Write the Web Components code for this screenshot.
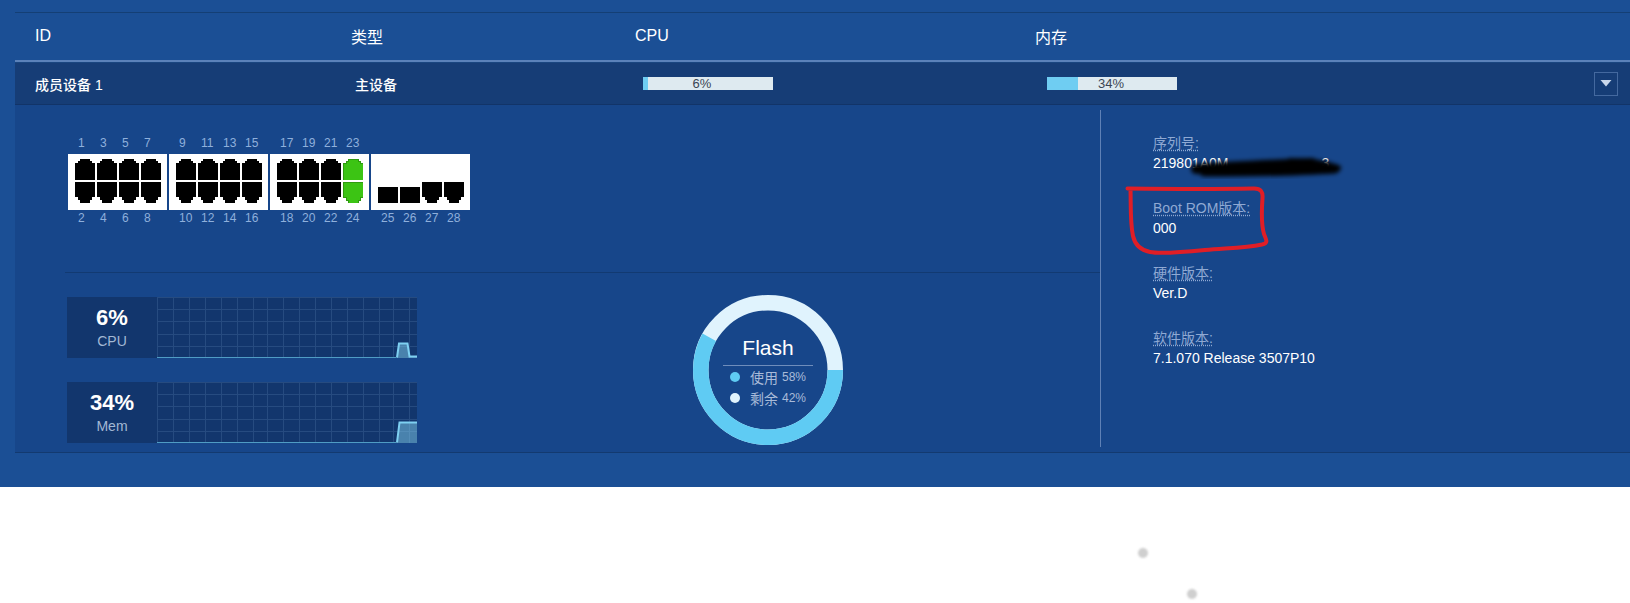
<!DOCTYPE html>
<html lang="zh">
<head>
<meta charset="utf-8">
<title>成员设备</title>
<style>
html,body{margin:0;padding:0;background:#fff}
body{font-family:"Liberation Sans","Noto Sans CJK SC",sans-serif;font-size:14px;color:#fff}
</style>
</head>
<body>
<device-page>
  <table-head></table-head>
  <member-row name="成员设备 1" role="主设备">
    <usage-bar slot="cpu" value="6" fill="5" shift="12"></usage-bar>
    <usage-bar slot="mem" value="34" fill="31" shift="2"></usage-bar>
  </member-row>
  <detail-panel>
    <switch-panel slot="switch"></switch-panel>
    <stat-chart slot="stats" value="6%" label="CPU" line="M0 60.5H240L242 46.5H250.5L252.5 59.5H260"></stat-chart>
    <stat-chart slot="stats" value="34%" label="Mem" line="M0 60.5H240L242.5 40.5H260"></stat-chart>
    <flash-donut slot="flash"></flash-donut>
    <info-item slot="info"><span slot="label">序列号:</span><span>219801A0M<span style="display:inline-block;width:93px"></span>3</span></info-item>
    <info-item slot="info"><span slot="label">Boot ROM版本:</span>000</info-item>
    <info-item slot="info"><span slot="label">硬件版本:</span>Ver.D</info-item>
    <info-item slot="info"><span slot="label">软件版本:</span>7.1.070 Release 3507P10</info-item>
  </detail-panel>
  <ink-overlay></ink-overlay>
</device-page>
<script>
function shadow(el, html){ el.attachShadow({mode:'open'}).innerHTML = html; return el.shadowRoot; }

customElements.define('device-page', class extends HTMLElement{
  constructor(){ super(); shadow(this, `<style>
    :host{display:block;position:relative;width:1630px;height:603px;background:#fff;overflow:hidden}
    .frame{height:475px;padding:12px 0 0 15px;background:#1b4f95}
    .table{border-top:1px solid #143f75}
  </style><div class="frame"><div class="table"><slot></slot></div></div><slot name="overlay"></slot>`); }
});

customElements.define('table-head', class extends HTMLElement{
  constructor(){ super(); shadow(this, `<style>
    :host{display:grid;grid-template-columns:316px 284px 400px 1fr;height:47px;padding-left:20px;align-items:center;font-size:16px;border-bottom:2px solid #5b82ba;box-sizing:content-box}
    span{padding-bottom:1px}
  </style><span>ID</span><span>类型</span><span>CPU</span><span>内存</span>`); }
});

customElements.define('member-row', class extends HTMLElement{
  constructor(){ super();
    shadow(this, `<style>
    :host{display:grid;grid-template-columns:316px 284px 400px 1fr auto;height:41px;padding:0 12px 0 20px;align-items:center;font-size:14px;font-weight:500;background:#163d76;border-top:1px solid #1a4680;border-bottom:1px solid #123468}
    .role{padding-left:4px}
    .cpu{padding-left:8px}
    .mem{padding-left:12px}
    button{all:unset;display:flex;align-items:center;justify-content:center;box-sizing:border-box;width:24px;height:24px;border:1px solid #44699f}
    button svg{display:block}
    </style><span class="name"></span><span class="role"></span><div class="cpu"><slot name="cpu"></slot></div><div class="mem"><slot name="mem"></slot></div><span></span>
    <button aria-label="展开"><svg width="12" height="7" viewBox="0 0 12 7"><path d="M.5 0H11.5L6 6.5Z" fill="#c9d8ec"/></svg></button>`);
    this.shadowRoot.querySelector('.name').textContent=this.getAttribute('name');
    this.shadowRoot.querySelector('.role').textContent=this.getAttribute('role');
    const g=this.shadowRoot.querySelectorAll('span')[2]; g.remove();
    this.shadowRoot.host.style.gridTemplateColumns='316px 284px 400px 1fr auto';
  }
});

customElements.define('usage-bar', class extends HTMLElement{
  constructor(){ super();
    const v=this.getAttribute('value'),f=this.getAttribute('fill'),s=this.getAttribute('shift');
    shadow(this, `<style>
    :host{display:block;width:130px;height:13px;background:#deeaf0;position:relative;font-size:13px;font-weight:400;line-height:14px;color:#3a4654}
    .fill{position:absolute;left:0;top:0;bottom:0;width:${f}px;background:#6fcdf2}
    .t{position:relative;display:block;text-align:center;padding-right:${s}px}
    </style><div class="fill"></div><span class="t">${v}%</span>`); }
});

customElements.define('detail-panel', class extends HTMLElement{
  constructor(){ super(); shadow(this, `<style>
    :host{display:flex;height:337px;padding:5px 0;background:#17468a;border-bottom:1px solid #133a70}
    .left{width:1035px;padding-left:50px;display:flex;flex-direction:column}
    .sw{height:136px;padding:26px 0 0 3px;border-bottom:1px solid #123a72}
    .low{display:flex;padding:24px 0 0 2px;gap:276px}
    .stats{display:flex;flex-direction:column;gap:24px}
    .flash{margin-top:-2px}
    .right{border-left:1px solid #5f81b6;padding:23px 0 0 52px;display:flex;flex-direction:column;gap:25px}
    </style>
    <div class="left">
      <div class="sw"><slot name="switch"></slot></div>
      <div class="low"><div class="stats"><slot name="stats"></slot></div><div class="flash"><slot name="flash"></slot></div></div>
    </div>
    <div class="right"><slot name="info"></slot></div>`); }
});

customElements.define('port-group', class extends HTMLElement{
  constructor(){ super();
    const top=this.getAttribute('top').split(','),bot=this.getAttribute('bottom').split(',');
    const kinds=(this.getAttribute('kinds')||'').split(',');
    const P={up:'M5 0H15V2H17V4H20V21H0V4H3V2H5Z',down:'M0 0H20V15H17V18H15V21H5V18H3V15H0Z'};
    const svg=(d,g)=>`<svg width="20" height="21" viewBox="0 0 20 21" shape-rendering="crispEdges"><path d="${d}" fill="${g?'#3cc414':'#000'}" ${g?'stroke="#2f9a10" stroke-width="1"':''}/></svg>`;
    let ups='',downs='';
    for(let i=0;i<4;i++){
      const k=kinds[i]||'n';
      ups+= k==='s'||k==='d' ? '<i></i>' : svg(P.up,k==='g');
      downs+= k==='s' ? '<svg width="20" height="21" viewBox="0 0 20 21" shape-rendering="crispEdges"><rect y="5" width="20" height="16"/></svg>' : svg(P.down,k==='g');
    }
    const lab=a=>a.map(t=>`<span>${t}</span>`).join('');
    shadow(this,`<style>
    :host{display:block;width:99px}
    .n{display:grid;grid-template-columns:repeat(4,20px);column-gap:2px;padding:0 6px 0 7px;height:14px;line-height:14px;font-size:12px;color:#8fb0dc}
    .n span{padding-left:3px;white-space:nowrap}
    .b{height:56px;box-sizing:border-box;margin:4px 0 1px;background:#fff;padding:5px 6px 0 7px;display:grid;grid-template-columns:repeat(4,20px);grid-auto-rows:21px;gap:2px}
    svg{display:block}
    </style><div class="n">${lab(top)}</div><div class="b">${ups}${downs}</div><div class="n">${lab(bot)}</div>`);
  }
});

customElements.define('switch-panel', class extends HTMLElement{
  constructor(){ super(); shadow(this,`<style>:host{display:flex;gap:2px}</style>
    <port-group top="1,3,5,7" bottom="2,4,6,8"></port-group>
    <port-group top="9,11,13,15" bottom="10,12,14,16"></port-group>
    <port-group top="17,19,21,23" bottom="18,20,22,24" kinds="n,n,n,g"></port-group>
    <port-group top=" , , , " bottom="25,26,27,28" kinds="s,s,d,d"></port-group>`);
    const last=this.shadowRoot.querySelectorAll('port-group')[3];
    last.shadowRoot.querySelector('.n').style.visibility='hidden';
  }
});

customElements.define('stat-chart', class extends HTMLElement{
  constructor(){ super();
    const xs=[0,16,32,48,64,80,96,110,126,142,158,174,190,206,222,236,252],ys=[0,12,24,37,49];
    const grid=xs.map(x=>`M${x+.5} 0V61`).concat(ys.map(y=>`M0 ${y+.5}H260`)).join('');
    const line=this.getAttribute('line');
    shadow(this,`<style>
    :host{display:flex;height:61px;background:#12366d}
    .box{width:90px;text-align:center;padding-top:8px;box-sizing:border-box}
    b{display:block;font-size:22px;line-height:26px;font-weight:700;color:#fff}
    span{display:block;font-size:14px;line-height:18px;margin-top:1px;color:#a3b8d4}
    svg{display:block}
    </style><div class="box"><b>${this.getAttribute('value')}</b><span>${this.getAttribute('label')}</span></div>
    <svg width="260" height="61" viewBox="0 0 260 61"><path d="${grid}" stroke="#264b80" fill="none"/>
    <path d="${line}V61H0Z" fill="#7fcdee" fill-opacity=".5"/>
    <path d="M0 60.5H239" stroke="#4f9cc4" fill="none"/>
    <path d="${line.replace(/^M0 [\d.]+H/,'M')}" transform="" stroke="#7ed0f2" stroke-width="2" fill="none" style="display:none"/>
    <path d="${line.replace(/^M0 ([\d.]+)H(\d+)/,'M$2 $1')}" stroke="#7ed0f2" stroke-width="2" fill="none"/></svg>`);
  }
});

customElements.define('flash-donut', class extends HTMLElement{
  constructor(){ super();
    const r=67.25,c=2*Math.PI*r;
    shadow(this,`<style>
    :host{display:grid;width:150px;height:150px}
    svg,.in{grid-area:1/1}
    svg{display:block}
    .in{width:90px;justify-self:center;padding-top:41px}
    .t{font-size:21px;line-height:24px;text-align:center;color:#fff}
    hr{margin:5px 0 0;border:0;height:1px;background:#6f8dbb}
    .l{display:flex;align-items:center;height:21px;padding-left:7px;font-size:14px;color:#a9bbd9;white-space:nowrap}
    .l i{width:10px;height:10px;border-radius:50%;margin-right:10px}
    .l small{font-size:12px;margin-left:4px}
    </style>
    <svg width="150" height="150" viewBox="0 0 150 150">
      <circle cx="75" cy="75" r="${r}" fill="none" stroke="#e0f3fd" stroke-width="15.5"/>
      <circle cx="75" cy="75" r="${r}" fill="none" stroke="#5fcbf3" stroke-width="15.5" stroke-dasharray="${c*.58} ${c}"/>
    </svg>
    <div class="in"><div class="t">Flash</div><hr>
      <div class="l"><i style="background:#5fcbf3"></i>使用<small>58%</small></div>
      <div class="l"><i style="background:#e0f3fd"></i>剩余<small>42%</small></div>
    </div>`);
  }
});

customElements.define('info-item', class extends HTMLElement{
  constructor(){ super(); shadow(this,`<style>
    :host{display:block;font-size:14px;line-height:20px;font-weight:400;color:#fff;height:40px;white-space:nowrap}
    .k{color:#8fa9d3;text-decoration:underline dotted #8fa9d3;text-underline-offset:2px;display:block}
    </style><div class="k"><slot name="label"></slot></div><div><slot></slot></div>`); }
});

customElements.define('ink-overlay', class extends HTMLElement{
  constructor(){ super(); shadow(this,`<style>
    :host{position:absolute;left:0;top:0;width:1630px;height:603px;pointer-events:none}
    svg{display:block}
    </style>
    <svg width="1630" height="603" viewBox="0 0 1630 603">
      <defs>
        <filter id="b" x="-20%" y="-60%" width="140%" height="220%"><feGaussianBlur stdDeviation="2.2"/></filter>
        <filter id="d" x="-100%" y="-100%" width="300%" height="300%"><feGaussianBlur stdDeviation="1.3"/></filter>
      </defs>
      <g filter="url(#b)" fill="none" stroke="#060606" stroke-linecap="round">
        <path d="M1196 169C1230 166 1270 165 1312 163" stroke-width="10"/>
        <path d="M1204 172C1240 172 1290 172 1335 169" stroke-width="9"/>
        <path d="M1290 161C1305 161 1325 163 1338 168" stroke-width="6"/>
      </g>
      <path d="M1127.5 188.5C1170 189 1225 189 1254 188.5C1261 188.5 1263 192 1262.5 198C1261.5 212 1261 224 1264 234C1267 241 1268 243 1262 244.5C1245 248 1228 248 1205 250C1185 252 1160 254 1150 252C1140 250 1135 245 1133 236C1130 222 1131 205 1130.5 189" fill="none" stroke="#e01e26" stroke-width="4" stroke-linecap="round" stroke-linejoin="round"/>
      <g filter="url(#d)" fill="#cfcfcf"><circle cx="1143" cy="553" r="5"/><circle cx="1192" cy="594" r="5"/></g>
    </svg>`); this.slot='overlay'; }
});
</script>
</body>
</html>
